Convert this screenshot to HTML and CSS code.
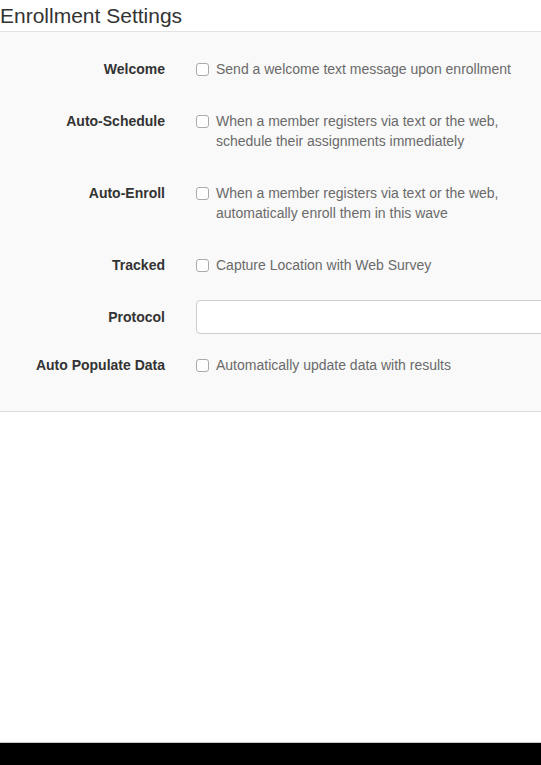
FILE: index.html
```html
<!DOCTYPE html>
<html lang="en">
<head>
<meta charset="utf-8">
<title>Enrollment Settings</title>
<link rel="stylesheet" href="styles.css">
</head>
<body>
<div class="page">
  <h3 class="title">Enrollment Settings</h3>
  <form class="panel">
    <div class="group check-group">
      <div class="label">Welcome</div>
      <label class="control"><input type="checkbox" class="cb"><span>Send a welcome text message upon enrollment</span></label>
    </div>
    <div class="group check-group">
      <div class="label">Auto-Schedule</div>
      <label class="control"><input type="checkbox" class="cb"><span>When a member registers via text or the web,<br>schedule their assignments immediately</span></label>
    </div>
    <div class="group check-group">
      <div class="label">Auto-Enroll</div>
      <label class="control"><input type="checkbox" class="cb"><span>When a member registers via text or the web,<br>automatically enroll them in this wave</span></label>
    </div>
    <div class="group check-group">
      <div class="label">Tracked</div>
      <label class="control"><input type="checkbox" class="cb"><span>Capture Location with Web Survey</span></label>
    </div>
    <div class="group input-group">
      <div class="label label-input">Protocol</div>
      <div class="control"><input type="text" class="text-input"></div>
    </div>
    <div class="group check-group last">
      <div class="label">Auto Populate Data</div>
      <label class="control"><input type="checkbox" class="cb"><span>Automatically update data with results</span></label>
    </div>
  </form>
  <div class="spacer"></div>
  <div class="footer"></div>
</div>
</body>
</html>
```

FILE: styles.css
```css
html, body {
  margin: 0;
  padding: 0;
  overflow: hidden;
  background: #ffffff;
}

body {
  font-family: "Liberation Sans", Arial, sans-serif;
  font-size: 14px;
  color: #333333;
}

.page {
  display: flex;
  flex-direction: column;
  height: 765px;
  width: 541px;
  overflow: hidden;
}

.title {
  margin: 0;
  height: 31px;
  font-size: 21px;
  line-height: 31px;
  font-weight: normal;
  color: #333333;
  border-bottom: 1px solid #e3e3e3;
  white-space: nowrap;
}

.panel {
  margin: 0;
  background: #f9f9f9;
  border-bottom: 1px solid #d9d9d9;
  padding: 20px 0 11px 0;
  display: flex;
  flex-direction: column;
}

.group {
  display: flex;
  align-items: flex-start;
  margin-bottom: 25px;
}

.group.input-group {
  margin-bottom: 14px;
}

.label {
  width: 165px;
  flex: none;
  text-align: right;
  font-weight: bold;
  line-height: 20px;
  padding-top: 7px;
  color: #333333;
  white-space: nowrap;
}

.control {
  margin-left: 31px;
  flex: none;
  width: 420px;
  display: flex;
  align-items: flex-start;
  line-height: 20px;
  color: #6a6a6a;
}

.check-group .control {
  padding-top: 7px;
}

.cb {
  -webkit-appearance: none;
  appearance: none;
  width: 13px;
  height: 13px;
  margin: 4px 7px 0 0;
  flex: none;
  border: 1px solid #aaaaaa;
  border-radius: 3px;
  background: #ffffff;
  box-sizing: border-box;
}

.text-input {
  width: 420px;
  height: 34px;
  box-sizing: border-box;
  border: 1px solid #cccccc;
  border-radius: 4px;
  background: #ffffff;
  margin: 0;
  padding: 6px 12px;
  font: inherit;
}

.spacer {
  flex: 1;
}

.footer {
  height: 22px;
  background: #000000;
  border-top: 1px solid #c8c8c8;
}
```
